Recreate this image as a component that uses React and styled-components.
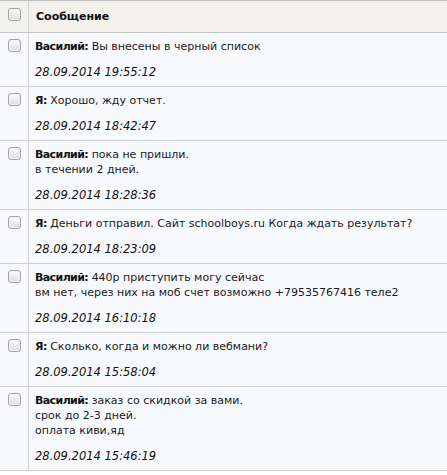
import React from "react";
import styled, { createGlobalStyle } from "styled-components";

const GlobalStyle = createGlobalStyle`
  body {
    margin: 0;
    background: #ffffff;
    font-family: "DejaVu Sans", Verdana, sans-serif;
  }
`;

const Table = styled.div`
  width: 100%;
  border-top: 1px solid #bebebe;
  font-size: 11px;
  color: #1a1a1a;
`;

const Row = styled.div`
  display: grid;
  grid-template-columns: 29px 1fr;
  background-color: ${(p) => (p.$head ? "#f2f1ea" : "#f8f9fc")};
  border-bottom: 1px solid ${(p) => (p.$head ? "#c4c4c4" : "#d0d0d0")};
`;

const CheckCell = styled.div`
  border-right: 1px solid #d0d0d0;
  display: flex;
  justify-content: center;
  padding-top: ${(p) => (p.$head ? "7px" : "6px")};
`;

const Box = styled.span`
  width: 11px;
  height: 11px;
  border: 1px solid #a3a3a3;
  border-radius: 3px;
  background: linear-gradient(#fbfbfb, #dedede);
  box-shadow: inset 0 0 0 1px #f4f4f4;
`;

const HeadTitle = styled.div`
  font-weight: bold;
  font-size: 11px;
  padding: 9px 7px 0;
  height: 22px;
  color: #111;
`;

const Body = styled.div`
  padding: 6px 6px 6px 6px;
`;

const Text = styled.div`
  line-height: 15px;
  white-space: pre-line;
  b {
    font-weight: bold;
    letter-spacing: -0.6px;
    color: #111;
  }
`;

const Date = styled.div`
  font-style: italic;
  font-size: 11.5px;
  line-height: 15px;
  margin-top: 11px;
  color: #111;
`;

const messages = [
  { who: "Василий", text: "Вы внесены в черный список", date: "28.09.2014 19:55:12" },
  { who: "Я", text: "Хорошо, жду отчет.", date: "28.09.2014 18:42:47" },
  { who: "Василий", text: "пока не пришли.\nв течении 2 дней.", date: "28.09.2014 18:28:36" },
  { who: "Я", text: "Деньги отправил. Сайт schoolboys.ru Когда ждать результат?", date: "28.09.2014 18:23:09" },
  { who: "Василий", text: "440р приступить могу сейчас\nвм нет, через них на моб счет возможно +79535767416 теле2", date: "28.09.2014 16:10:18" },
  { who: "Я", text: "Сколько, когда и можно ли вебмани?", date: "28.09.2014 15:58:04" },
  { who: "Василий", text: "заказ со скидкой за вами.\nсрок до 2-3 дней.\nоплата киви,яд", date: "28.09.2014 15:46:19" },
];

export default function App() {
  return (
    <>
      <GlobalStyle />
      <Table>
        <Row $head>
          <CheckCell $head>
            <Box />
          </CheckCell>
          <HeadTitle>Сообщение</HeadTitle>
        </Row>
        {messages.map((m, i) => (
          <Row key={i}>
            <CheckCell>
              <Box />
            </CheckCell>
            <Body>
              <Text>
                <b>{m.who}:</b> {m.text}
              </Text>
              <Date>{m.date}</Date>
            </Body>
          </Row>
        ))}
      </Table>
    </>
  );
}
